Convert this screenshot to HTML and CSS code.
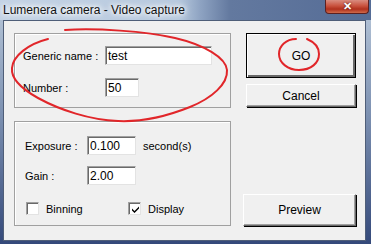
FILE: index.html
```html
<!DOCTYPE html>
<html lang="en">
<head>
    <meta charset="UTF-8">
    <title>Lumenera camera - Video capture</title>
    <link rel="stylesheet" href="styles.css">
</head>
<body>

<div class="window">
    <div class="titlebar">
        <span class="title">Lumenera camera - Video capture</span>
        <span class="close">&#x2715;</span>
    </div>
    <div class="frame">
        <div class="client">
            <div class="left">
                <div class="group group-name">
                    <div class="row">
                        <label>Generic name :</label>
                        <span class="field field-name">test</span>
                    </div>
                    <div class="row">
                        <label>Number :</label>
                        <span class="field field-num">50</span>
                    </div>
                </div>
                <div class="group group-cam">
                    <div class="row">
                        <label>Exposure :</label>
                        <span class="field field-val">0.100</span>
                        <span class="unit">second(s)</span>
                    </div>
                    <div class="row">
                        <label>Gain :</label>
                        <span class="field field-val">2.00</span>
                    </div>
                    <div class="checks">
                        <span class="check"><span class="box"></span>Binning</span>
                        <span class="check"><span class="box checked">
                            <svg width="7" height="7" viewBox="0 0 7 7"><path d="M0 2.5 L2.5 5 L7 0.5 L7 2.5 L2.5 7 L0 4.5 Z" fill="#000"/></svg>
                        </span>Display</span>
                    </div>
                </div>
            </div>
            <div class="right">
                <button class="btn btn-go">GO</button>
                <button class="btn btn-cancel">Cancel</button>
                <button class="btn btn-preview">Preview</button>
            </div>
        </div>
    </div>

    <!-- red pen marks drawn over the dialog -->
    <svg class="marks" width="371" height="244" viewBox="0 0 371 244">
        <path d="M65,30 C95,28 145,31 175,38 C205,45 226,58 227,70 C228,84 212,98 190,107 C165,117 140,122 118,121 C90,120 60,110 38,98 C20,88 11,78 12,68 C13,56 28,44 48,39"
              fill="none" stroke="#e1262a" stroke-width="2" stroke-linecap="round"/>
        <path d="M296,39 C286,39 279,46 279,54 C279,63 288,70 299,70 C311,70 319,63 319,54 C319,47 314,42 307,39"
              fill="none" stroke="#e1262a" stroke-width="2" stroke-linecap="round"/>
    </svg>
</div>

</body>
</html>
```

FILE: styles.css
```css
body {
    margin: 0;
    font-family: "Liberation Sans", Arial, sans-serif;
    font-size: 11px;
    color: #000;
}
.window {
    position: relative;
    width: 371px;
    height: 244px;
    display: flex;
    flex-direction: column;
    background: linear-gradient(to bottom, #b9c8da 0%, #7f93b3 45%, #34497a 100%);
}
.titlebar {
    height: 20px;
    flex: none;
    display: flex;
    align-items: center;
    justify-content: space-between;
    background: linear-gradient(to right, #c4d3e5 0%, #b7c9de 48%, #8ea3c2 54%, #63799f 62%, #556c96 100%);
}
.title {
    font-size: 12px;
    padding-left: 3px;
    margin-top: -1px;
    color: #111;
    text-shadow: 0 0 4px #fff, 0 0 6px #fff, 0 0 8px #fff;
}
.close {
    align-self: flex-start;
    width: 42px;
    height: 13px;
    margin-right: 2px;
    border: 1px solid #5c2020;
    border-top: none;
    border-radius: 0 0 4px 4px;
    background: linear-gradient(to bottom, #d98c7f 0%, #c9523e 45%, #b0301d 70%, #cf6a4c 100%);
    color: #fff;
    font-size: 11px;
    font-weight: bold;
    line-height: 12px;
    text-align: center;
    text-shadow: 0 0 2px #400;
}
.frame {
    flex: 1;
    display: flex;
    padding: 0 5px 3px 3px;
}
.client {
    flex: 1;
    display: grid;
    grid-template-columns: 217px 113px;
    column-gap: 12px;
    padding: 12px 0 14px 10px;
    background: #f0f0f0;
    border: 1px solid #4f5e78;
}
.left {
    display: flex;
    flex-direction: column;
    gap: 13px;
}
.group {
    border: 1px solid #a0a0a0;
    box-shadow: inset 1px 1px 0 #fff;
}
.group-name {
    height: 73px;
    padding: 12px 0 0 8px;
    box-sizing: border-box;
    height: 75px;
    display: flex;
    flex-direction: column;
    gap: 13px;
}
.group-name label {
    width: 82px;
}
.group-cam {
    flex: 1;
    padding: 14px 0 0 10px;
    display: flex;
    flex-direction: column;
    gap: 11px;
}
.group-cam label {
    width: 62px;
}
.row {
    display: flex;
    align-items: center;
}
.field {
    box-sizing: border-box;
    height: 19px;
    padding: 2px 0 0 2px;
    background: #fff;
    border-top: 1px solid #a0a0a0;
    border-left: 1px solid #a0a0a0;
    border-right: 1px solid #e3e3e3;
    border-bottom: 1px solid #e3e3e3;
    box-shadow: inset 1px 1px 0 #696969;
    font-size: 12px;
    line-height: 14px;
}
.field-name {
    width: 107px;
}
.field-num {
    width: 34px;
}
.field-val {
    width: 49px;
}
.unit {
    margin-left: 7px;
}
.checks {
    display: flex;
    margin-top: 6px;
    padding-left: 1px;
}
.check {
    display: flex;
    align-items: center;
    gap: 7px;
    width: 105px;
}
.box {
    box-sizing: border-box;
    width: 13px;
    height: 13px;
    background: #fff;
    border-top: 1px solid #a0a0a0;
    border-left: 1px solid #a0a0a0;
    border-right: 1px solid #e3e3e3;
    border-bottom: 1px solid #e3e3e3;
    box-shadow: inset 1px 1px 0 #696969;
    display: flex;
    align-items: center;
    justify-content: center;
    padding: 1px 0 0 1px;
}
.right {
    display: flex;
    flex-direction: column;
    align-items: flex-end;
}
.btn {
    box-sizing: border-box;
    font-family: "Liberation Sans", Arial, sans-serif;
    font-size: 11px;
    color: #000;
    background: #f0f0f0;
    border-top: 1px solid #fff;
    border-left: 1px solid #fff;
    border-right: 1px solid #696969;
    border-bottom: 1px solid #696969;
    box-shadow: inset -1px -1px 0 #a0a0a0, 1px 1px 0 #000;
    padding: 0;
}
.btn-go {
    width: 110px;
    height: 45px;
    border: 1px solid #000;
    box-shadow: inset 1px 1px 0 #fff, inset -2px -2px 0 #696969, inset -1px -1px 0 #000;
    font-size: 12px;
}
.btn-cancel {
    width: 110px;
    height: 23px;
    margin-top: 6px;
    font-size: 12px;
}
.btn-preview {
    width: 113px;
    height: 32px;
    margin-top: auto;
    font-size: 12px;
}
.marks {
    position: absolute;
    left: 0;
    top: 0;
    pointer-events: none;
}
```
